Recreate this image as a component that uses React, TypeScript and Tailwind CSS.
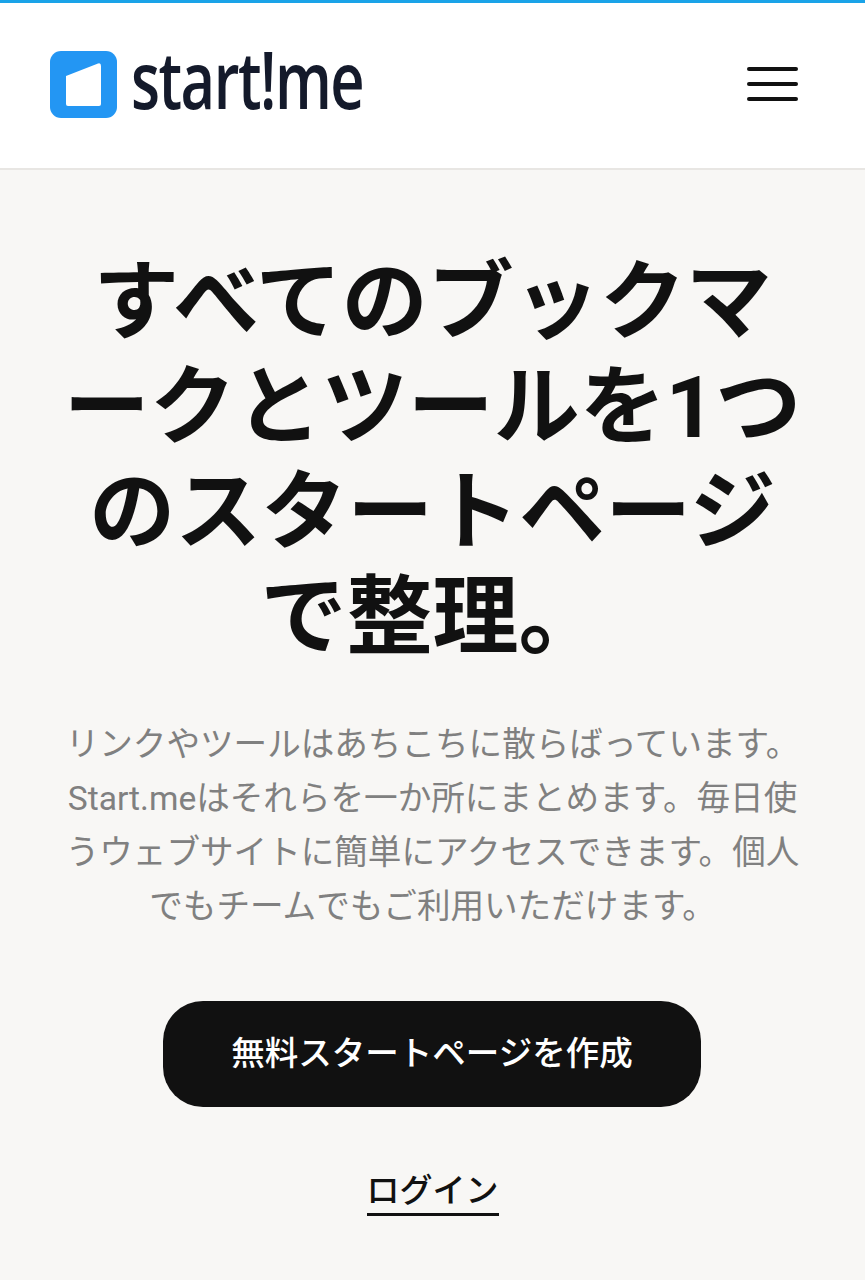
import React from 'react';

const Logo: React.FC = () => (
    <div className="flex items-center gap-[14px]">
        <svg width="67" height="67" viewBox="0 0 67 67">
            <rect width="67" height="67" rx="11" fill="#2396f3" />
            <path d="M16 25 L48 12.500 Q51 11.500 51 15 L51 53 Q51 55 49 55 L18 55 Q16 55 16 53 Z" fill="#fff" />
        </svg>
        <span className="font-['Open_Sans',sans-serif] text-[80px] leading-none font-semibold text-[#141a2b] tracking-[-2px] mt-[-12px] origin-left scale-x-[0.745]">
            start!me
        </span>
    </div>
);

export default function App() {
    return (
        <div className="min-h-[1280px] bg-[#f8f7f5] font-['Roboto','Noto_Sans_CJK_JP',sans-serif]">
            <header className="h-[170px] flex items-center justify-between bg-white border-t-[3px] border-t-[#1aa3e8] border-b-2 border-b-[#e8e6e3] pl-[50px] pr-[67px]">
                <div className="mt-[-3px]">
                    <Logo />
                </div>
                <div className="flex flex-col gap-[10.500px] mt-[-3px]">
                    <div className="w-[51px] h-[4.500px] rounded-full bg-[#111]" />
                    <div className="w-[51px] h-[4.500px] rounded-full bg-[#111]" />
                    <div className="w-[51px] h-[4.500px] rounded-full bg-[#111]" />
                </div>
            </header>

            <main className="flex flex-col items-center px-[60px] pt-[80px] text-center">
                <h1 className="text-[86px] leading-[105px] font-bold text-[#111]">
                    すべてのブックマークとツールを1つのスタートページで整理。
                </h1>
                <p className="mt-[48px] text-[33.600px] leading-[54px] text-[#808080]">
                    リンクやツールはあちこちに散らばっています。Start.meはそれらを一か所にまとめます。毎日使うウェブサイトに簡単にアクセスできます。個人でもチームでもご利用いただけます。
                </p>
                <button className="mt-[67px] mr-[1px] w-[538px] h-[106px] rounded-[40px] bg-[#111] text-white text-[33.500px] font-medium">
                    無料スタートページを作成
                </button>
                <a className="mt-[62px] text-[33px] leading-[44px] font-medium text-[#111] border-b-[3px] border-[#111]">
                    ログイン
                </a>
            </main>
        </div>
    );
}
